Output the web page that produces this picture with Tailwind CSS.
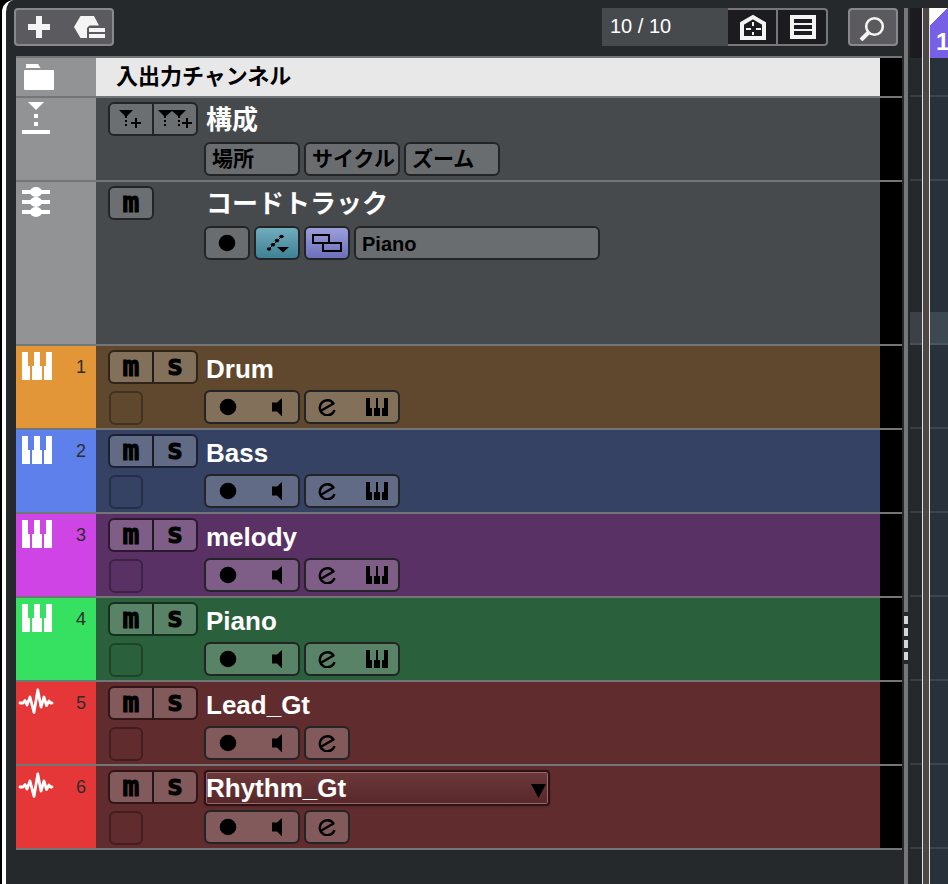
<!DOCTYPE html>
<html lang="ja">
<head>
<meta charset="utf-8">
<title>トラックリスト</title>
<script src="https://cdn.jsdelivr.net/npm/@tailwindcss/browser@4"></script>
</head>
<body class="flex min-h-screen bg-black pl-0.5 font-['Liberation_Sans','Noto_Sans_CJK_JP',sans-serif] text-white">
<svg class="hidden" aria-hidden="true">
  <symbol id="keys" viewBox="0 0 30 28"><path fill="currentColor" d="M0 0h6v14h2v14H0zM12 0h6v14h2v14H10V14h2zM24 0h6v28h-8V14h2z"/></symbol>
  <symbol id="wave" viewBox="0 0 36 28"><path fill="none" stroke="currentColor" stroke-width="2.800" stroke-linejoin="round" stroke-linecap="round" d="M2 15h3l2-2.500L9 17l3-8 4 15.500L19.800 2 23 19l3-10 2.500 8.500L31 13l1.500 2H34"/></symbol>
  <symbol id="rec" viewBox="0 0 18 18"><circle cx="9" cy="9" r="8.300"/></symbol>
  <symbol id="speaker" viewBox="0 0 18 18"><path d="M5 4.500h5L15 0v18.500L10 13.500H5z"/></symbol>
  <symbol id="edit" viewBox="0 0 18 18"><path fill="none" stroke="currentColor" stroke-width="2.500" stroke-linejoin="round" d="M2.500 13L15.500 5.500A7.500 7.500 0 1 0 16.500 12"/></symbol>
  <symbol id="minikeys" viewBox="0 0 22 18"><path d="M0 0h4v10h2v8H0zM10 0h2v10h2v8H8v-8h2zM18 0h4v18h-6v-8h2z"/></symbol>
</svg>

<div class="flex min-h-screen flex-1 rounded-tl-xl border-l-4 border-white bg-[#25292b]">
  <main class="flex min-w-0 flex-1 flex-col pl-2">
    <header class="flex h-14 items-start justify-between pt-2 pr-1.5">
      <div class="flex h-[38px] rounded border-2 border-[#89898c] bg-[#5b5b5f]">
        <button class="flex w-[46px] items-center justify-center" aria-label="トラックを追加">
          <svg class="h-6 w-6" viewBox="0 0 24 24"><path fill="#f4f4f4" d="M9 1h6v8h8v6h-8v8H9v-8H1V9h8z"/></svg>
        </button>
        <button class="flex w-[50px] items-center justify-center pl-1.5" aria-label="トラックプリセット">
          <svg class="h-6 w-8" viewBox="0 0 32 24"><path fill="#f4f4f4" d="M0 12L6.500 1H20l5 9.500H15.500L13 13v10H6.500zM15 13h16v4H15zM15 19h16v4H15z"/></svg>
        </button>
      </div>
      <div class="flex h-[38px]">
        <div class="w-[126px] bg-[#464a4d] pl-2 text-[20px] leading-9">10 / 10</div>
        <div class="flex rounded-r border-y-2 border-r-2 border-[#77777a] bg-[#1c1c20]">
          <button class="flex w-[50px] items-center justify-center border-r-2 border-[#77777a] pl-0.5" aria-label="可視性エージェント">
            <svg class="h-7 w-7" viewBox="0 0 28 28"><path fill="none" stroke="#f4f4f4" stroke-width="4" d="M3 25V10.500L14 4l11 6.500V25z"/><path stroke="#f4f4f4" stroke-width="2" d="M14 9v4M14 19v3M7 16h5M17 16h5"/></svg>
          </button>
          <button class="flex w-12 items-center justify-center pl-0.5" aria-label="リスト表示">
            <svg class="h-6 w-[26px]" viewBox="0 0 26 24"><path fill="#f4f4f4" fill-rule="evenodd" d="M0 0h26v24H0zM4 4v4h18V4zM4 10v4h18v-4zM4 16v4h18v-4z"/></svg>
          </button>
        </div>
        <button class="ml-5 flex w-[50px] items-center justify-center rounded border-2 border-[#89898c] bg-[#5b5b5f]" aria-label="検索">
          <svg class="h-7 w-7" viewBox="0 0 28 28"><circle cx="15.500" cy="13.500" r="8.300" fill="none" stroke="#f4f4f4" stroke-width="2.600"/><path stroke="#f4f4f4" stroke-width="4" d="M10 19l-8 8"/></svg>
        </button>
      </div>
    </header>

    <section class="mr-0.5 ml-0.5 border-t-2 border-[#737678]" id="tracks">
      <article class="flex h-10 border-b-2 border-[#737678] bg-black pr-[22px]">
        <div class="w-20 bg-[#929395] pt-1.5 pl-2">
          <svg class="h-[26px] w-[30px]" viewBox="0 0 30 26"><path fill="#fff" d="M2 0h12l2.500 4H2zM1 6h28q1 0 1 1v18q0 1-1 1H1q-1 0-1-1V7q0-1 1-1z"/></svg>
        </div>
        <h2 class="flex-1 bg-[#e8e8e8] pl-5 text-[22px] leading-[38px] font-bold text-black">入出力チャンネル</h2>
      </article>

      <article class="flex h-[84px] border-b-2 border-[#737678] bg-black pr-[22px]">
        <div class="w-20 bg-[#929395] pt-1 pl-1.5">
          <svg class="h-8 w-7" viewBox="0 0 28 32"><path fill="#fff" d="M6 0h16l-8 8zM12 12h4v4h-4zM12 20h4v4h-4zM0 28h28v4H0z"/></svg>
        </div>
        <div class="flex flex-1 bg-[#464a4d]">
          <div class="w-[108px] pt-1 pl-3">
            <div class="flex h-[34px] w-[90px] rounded-md border-2 border-[#222425] bg-[#6c6f71]">
              <button class="flex flex-1 items-center justify-center border-r-2 border-[#222425]" aria-label="マーカーを追加">
                <svg class="h-5 w-6" viewBox="0 0 24 20"><path d="M0 1h14L8 7v2H6V7zM6 11h2v2H6zM6 15h2v2H6zM16 9h2v4h4v2h-4v4h-2v-4h-4v-2h4z"/></svg>
              </button>
              <button class="flex flex-1 items-center justify-center" aria-label="サイクルマーカーを追加">
                <svg class="h-5 w-9" viewBox="0 0 36 20"><path d="M1 1h28l-6 6v2h-2V7l-6-5-6 5v2H7V7zM7 11h2v2H7zM7 15h2v2H7zM21 11h2v2h-2zM21 15h2v2h-2zM29 9h2v4h4v2h-4v4h-2v-4h-4v-2h4z"/></svg>
              </button>
            </div>
          </div>
          <div class="flex-1">
            <h2 class="h-11 pl-0.5 text-[26px] leading-[44px] font-bold">構成</h2>
            <div class="flex gap-1 text-[21px] leading-[30px] font-bold text-black">
              <button class="h-[34px] w-24 rounded-md border-2 border-[#222425] bg-[#6a6d6f] pl-1.5 text-left whitespace-nowrap">場所</button>
              <button class="h-[34px] w-24 rounded-md border-2 border-[#222425] bg-[#6a6d6f] pl-1.5 text-left whitespace-nowrap">サイクル</button>
              <button class="h-[34px] w-24 rounded-md border-2 border-[#222425] bg-[#6a6d6f] pl-1.5 text-left whitespace-nowrap">ズーム</button>
            </div>
          </div>
        </div>
      </article>

      <article class="flex h-[164px] border-b-2 border-[#737678] bg-black pr-[22px]">
        <div class="w-20 bg-[#929395] pt-1 pl-1.5">
          <svg class="h-8 w-7" viewBox="0 0 28 32"><path fill="#fff" d="M0 4h28v4H0zM0 14h28v4H0zM0 24h28v4H0z"/><g fill="#fff"><ellipse cx="14" cy="6" rx="6" ry="5"/><ellipse cx="14" cy="16" rx="6" ry="5"/><ellipse cx="14" cy="26" rx="6" ry="5"/></g></svg>
        </div>
        <div class="flex flex-1 bg-[#464a4d]">
          <div class="w-[108px] pt-1 pl-3">
            <button class="flex h-[34px] w-[46px] items-center justify-center rounded-md border-2 border-[#222425] bg-[#6c6f71] pt-1 font-['DejaVu_Sans_Mono',monospace] text-[28px] leading-6 font-bold text-black [-webkit-text-stroke:1px_black]" title="ミュート"><span class="-mt-1">m</span></button>
          </div>
          <div class="flex-1">
            <h2 class="h-11 pl-0.5 text-[26px] leading-[44px] font-bold">コードトラック</h2>
            <div class="flex gap-1 text-black">
              <button class="flex h-[34px] w-[46px] items-center justify-center rounded-md border-2 border-[#222425] bg-[#6a6d6f]" aria-label="録音可能"><svg class="h-[18px] w-[18px]"><use href="#rec"/></svg></button>
              <button class="flex h-[34px] w-[46px] items-center justify-center rounded-md border-2 border-[#222425] bg-linear-to-b from-[#70acbd] to-[#3e8194]" aria-label="ボイシング">
                <svg class="h-5 w-6" viewBox="0 0 24 20"><path fill="none" stroke="#000" stroke-width="1" d="M4 16L17 3"/><ellipse cx="4" cy="16" rx="2.200" ry="1.800"/><ellipse cx="8" cy="11.800" rx="2.200" ry="1.800"/><ellipse cx="12" cy="7.600" rx="2.200" ry="1.800"/><ellipse cx="16.500" cy="3.500" rx="2.200" ry="1.800"/><path d="M12 14h12l-6 5.500z"/></svg>
              </button>
              <button class="flex h-[34px] w-[46px] items-center justify-center rounded-md border-2 border-[#222425] bg-linear-to-b from-[#9c9edb] to-[#6c70ba]" aria-label="イベントを表示">
                <svg class="h-5 w-8" viewBox="0 0 32 20"><path fill="none" stroke="#000" stroke-width="2" d="M2 2h16v8H2zM12 10h18v8H12z"/></svg>
              </button>
              <button class="h-[34px] w-[246px] rounded-md border-2 border-[#222425] bg-[#6a6d6f] pl-1.5 text-left text-[20px] leading-8 font-bold">Piano</button>
            </div>
          </div>
        </div>
      </article>
    </section>
  </main>

  <div class="flex w-1 flex-col pt-2">
    <div class="h-[604px] bg-[#77777a]"></div>
    <div class="flex flex-col gap-1 py-1">
      <i class="h-2 bg-[#d5d8d6]"></i><i class="h-2 bg-[#d5d8d6]"></i><i class="h-2 bg-[#d5d8d6]"></i><i class="h-2 bg-[#d5d8d6]"></i>
    </div>
    <div class="flex-1 bg-[#77777a]"></div>
  </div>

  <aside class="flex w-10 pt-2 pl-0.5">
    <div class="w-3">
      <div class="h-[50px] bg-[#1c1c20]"></div>
      <div class="h-[37px]"></div>
      <div class="h-[84px] border-t-2 border-[#3b3d41]"></div>
      <div class="h-[133px] border-t-2 border-[#3b3d41]"></div>
      <div class="h-[33px] border-b-2 border-[#4b4f54] bg-[#3c4148]"></div>
      <div class="h-[84px] border-b-2 border-[#3b3d41]"></div>
      <div class="h-[84px] border-b-2 border-[#3b3d41]"></div>
      <div class="h-[84px] border-b-2 border-[#3b3d41]"></div>
      <div class="h-[84px] border-b-2 border-[#3b3d41]"></div>
      <div class="h-[84px] border-b-2 border-[#3b3d41]"></div>
      <div class="h-[84px] border-b-2 border-[#3b3d41]"></div>
    </div>
    <div class="w-2 border-x border-[#e6e4e2] bg-[#4c4845]"></div>
    <div class="flex-1 overflow-hidden bg-[#28303a]">
      <div class="h-[50px] overflow-hidden bg-linear-135 from-white from-[26%] to-[#7760e6] to-[26%] pt-5 pl-1.5 text-[24px] leading-7 font-bold">1</div>
      <div class="h-[37px]"></div>
      <div class="h-[84px] border-t-2 border-[#3d4650]"></div>
      <div class="h-[133px] border-t-2 border-[#3d4650]"></div>
      <div class="h-[33px] border-b-2 border-[#4b5560] bg-[#3d4850]"></div>
      <div class="h-[84px] border-b-2 border-[#3d4650]"></div>
      <div class="h-[84px] border-b-2 border-[#3d4650]"></div>
      <div class="h-[84px] border-b-2 border-[#3d4650]"></div>
      <div class="h-[84px] border-b-2 border-[#3d4650]"></div>
      <div class="h-[84px] border-b-2 border-[#3d4650]"></div>
      <div class="h-[84px] border-b-2 border-[#3d4650]"></div>
    </div>
  </aside>
</div>

<script>
const tracks = [
  { name: 'Drum', midi: true, strip: 'bg-[#e39637]', body: 'bg-[#5f482e]' },
  { name: 'Bass', midi: true, strip: 'bg-[#5d80ea]', body: 'bg-[#364264]' },
  { name: 'melody', midi: true, strip: 'bg-[#cf44e4]', body: 'bg-[#5a3165]' },
  { name: 'Piano', midi: true, strip: 'bg-[#36e060]', body: 'bg-[#2a603b]' },
  { name: 'Lead_Gt', midi: false, strip: 'bg-[#e53737]', body: 'bg-[#602c2e]' },
  { name: 'Rhythm_Gt', midi: false, selected: true, strip: 'bg-[#e53737]', body: 'bg-[#602c2e]' },
];

const stripIcon = t => t.midi
  ? '<svg class="mt-1.5 ml-1.5 h-7 w-[30px]"><use href="#keys"/></svg>'
  : '<svg class="mt-1.5 ml-0.5 h-7 w-9"><use href="#wave"/></svg>';

const nameField = t => t.selected
  ? `<div class="relative h-11 pt-1">
      <select aria-label="トラック名" class="h-9 w-[346px] appearance-none rounded border-2 border-[#2c1214] bg-linear-to-b from-[#6c393b] to-[#582729] text-[26px] leading-8 font-bold inset-ring inset-ring-[#98696b] shadow"><option>${t.name}</option></select>
      <svg class="pointer-events-none absolute top-[18px] left-[327px] h-[14px] w-[15px]" viewBox="0 0 15 14"><path d="M0 0h15L7.500 14z"/></svg>
    </div>`
  : `<h2 class="h-11 pl-0.5 text-[26px] leading-[46px] font-bold">${t.name}</h2>`;

const row = (t, i) => `
  <article class="flex h-[84px] border-b-2 border-[#737678] bg-black pr-[22px]">
    <div class="flex w-20 justify-between pr-2.5 ${t.strip}">
      ${stripIcon(t)}
      <span class="text-[18px] leading-[42px] text-[#2d2d2d]">${i + 1}</span>
    </div>
    <div class="flex flex-1 ${t.body}">
      <div class="w-[108px] pt-1 pl-3">
        <div class="flex h-[34px] w-[90px] rounded-md border-2 border-black/50 bg-white/22 bg-clip-padding font-bold text-black [-webkit-text-stroke:1px_black]">
          <button class="flex flex-1 items-center justify-center border-r-2 border-black/75 pt-1 font-['DejaVu_Sans_Mono',monospace] text-[28px] leading-6" title="ミュート"><span class="-mt-1">m</span></button>
          <button class="flex flex-1 items-center justify-center pt-0.5 font-['DejaVu_Sans',sans-serif] text-[21px] leading-6" title="ソロ">S</button>
        </div>
        <button class="mt-[7px] ml-px block h-[34px] w-[34px] rounded-md border-2 border-black/30" aria-label="モニター"></button>
      </div>
      <div class="flex-1">
        ${nameField(t)}
        <div class="flex gap-1 text-black">
          <div class="flex h-[34px] w-24 rounded-md border-2 border-[#222425] bg-white/22 bg-clip-padding">
            <button class="flex w-11 items-center justify-center" aria-label="録音可能"><svg class="h-[18px] w-[18px]"><use href="#rec"/></svg></button>
            <button class="flex flex-1 items-center justify-center pl-1" aria-label="モニタリング"><svg class="h-[18px] w-[18px]"><use href="#speaker"/></svg></button>
          </div>
          <div class="flex h-[34px] rounded-md border-2 border-[#222425] bg-white/22 bg-clip-padding">
            <button class="flex w-[42px] items-center justify-center" aria-label="チャンネル設定の編集"><svg class="h-[18px] w-[18px]"><use href="#edit"/></svg></button>
            ${t.midi ? '<button class="flex w-[50px] items-center justify-center pl-2" aria-label="インストゥルメントの編集"><svg class="h-[18px] w-[22px]"><use href="#minikeys"/></svg></button>' : ''}
          </div>
        </div>
      </div>
    </div>
  </article>`;

document.getElementById('tracks').insertAdjacentHTML('beforeend', tracks.map(row).join(''));
</script>
</body>
</html>
